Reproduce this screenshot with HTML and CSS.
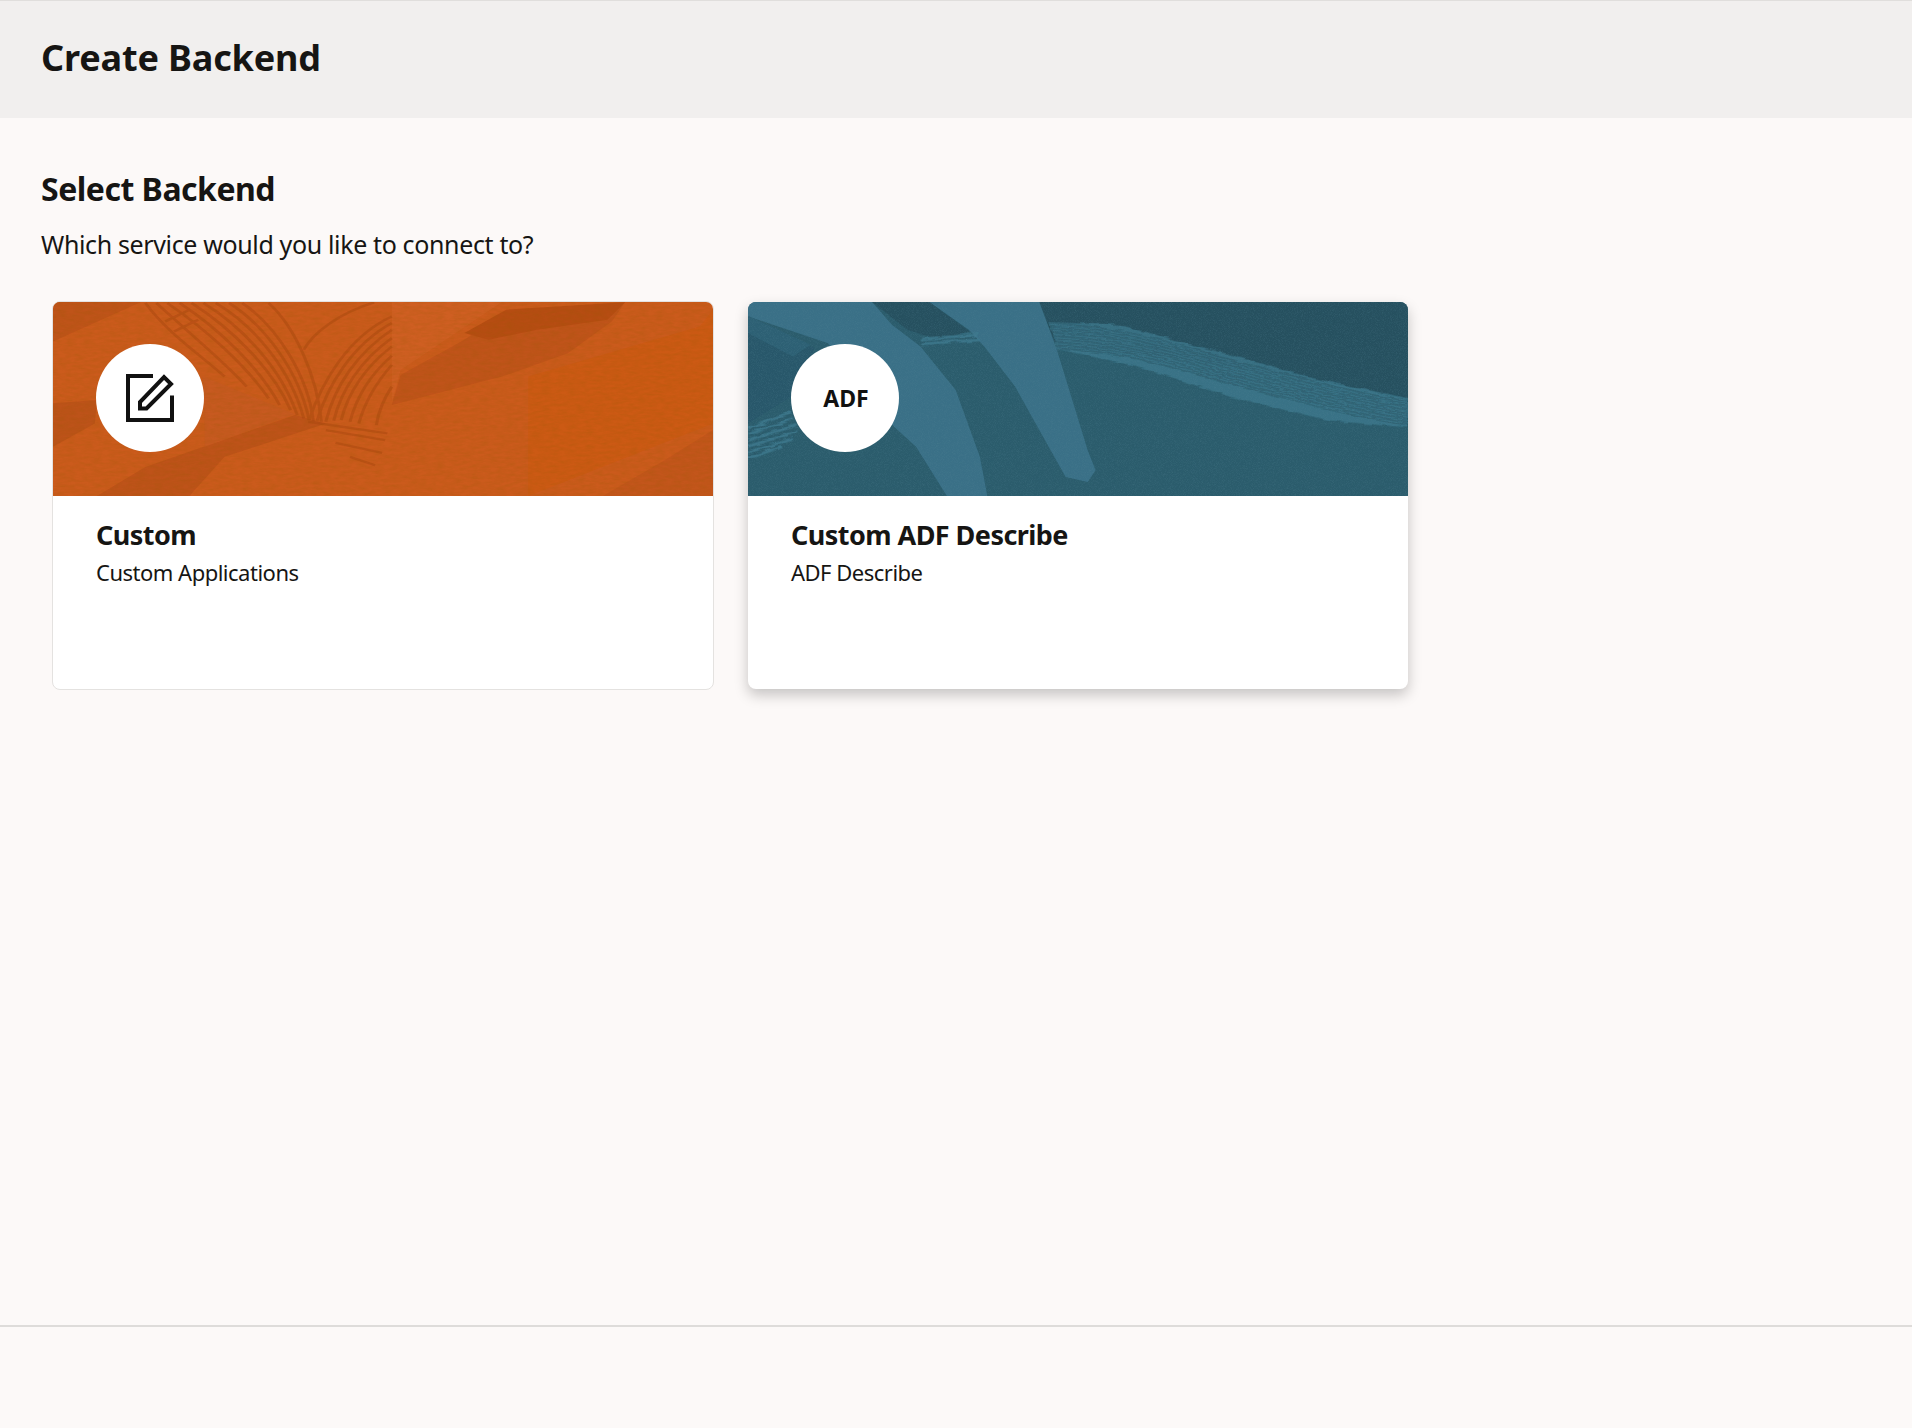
FILE: index.html
```html
<!DOCTYPE html>
<html lang="en">
<head>
    <meta charset="UTF-8">
    <title>Create Backend</title>
    <link rel="stylesheet" href="styles.css">
</head>
<body>
    <div class="page">
        <header class="page-header">
            <h1 class="page-title">Create Backend</h1>
        </header>

        <main class="page-content">
            <h2 class="section-title">Select Backend</h2>
            <p class="section-text">Which service would you like to connect to?</p>

            <div class="card-list">
                <div class="card">
                    <div class="card-banner">
                        <svg class="banner-art" viewBox="30 37 1500 580" preserveAspectRatio="none">
                            <defs>
                                <filter id="paper" x="0" y="0" width="100%" height="100%">
                                    <feTurbulence type="fractalNoise" baseFrequency="0.05 0.12" numOctaves="3" seed="4"/>
                                    <feColorMatrix values="0 0 0 0 0.3  0 0 0 0 0.1  0 0 0 0 0  0.9 0 0 0 -0.28"/>
                                </filter>
                            </defs>
                            <rect x="30" y="37" width="1500" height="580" fill="#cb5b1c"/>
                            <path d="M30 37H230L30 155Z" fill="#bf5419"/>
                            <path d="M30 340L130 330L125 400L30 470Z" fill="#bd5319"/>
                            <path d="M130 617L240 530L580 375L650 400L420 500L340 617Z" fill="#be5319"/>
                            <path d="M370 258L580 372L375 470L373 330Z" fill="#c75a20"/>
                            <path d="M800 345L820 255L965 150L1060 65L1330 38L1300 95L1200 190L1050 260Z" fill="#c0541a"/>
                            <path d="M965 130L1060 60L1330 38L1290 90L1130 120L1020 150Z" fill="#b64d12"/>
                            <path d="M1530 420V617H1280L1420 510Z" fill="#c3561b"/>
                            <path d="M800 37H1050L820 240L800 340Z" fill="#cf6024" opacity=".8"/>
                            <path d="M1110 260L1500 110L1530 60V400L1110 617Z" fill="#cc5a14"/>
                            <g fill="none" stroke="#ab4810" stroke-width="7" opacity=".5">
                                <path d="M240 40C290 130 370 200 420 260"/>
                                <path d="M265 40C335 125 420 215 470 290"/>
                                <path d="M290 40C380 120 470 230 520 325"/>
                                <path d="M318 40C410 120 500 235 545 345"/>
                                <path d="M345 40C440 120 530 240 570 360"/>
                                <path d="M372 40C465 115 550 240 585 375"/>
                                <path d="M400 40C490 110 570 240 600 385"/>
                                <path d="M430 40C515 110 590 250 612 390"/>
                                <path d="M460 40C540 110 610 260 622 395"/>
                                <path d="M520 40C580 110 630 260 640 395"/>
                                <path d="M800 80C700 140 640 280 612 390"/>
                                <path d="M800 100C710 165 655 285 630 392"/>
                                <path d="M800 120C720 190 670 290 650 395"/>
                                <path d="M800 145C730 210 685 300 668 392"/>
                                <path d="M800 170C740 230 700 310 685 390"/>
                                <path d="M800 198C755 250 720 320 705 395"/>
                                <path d="M800 225C770 270 740 330 725 400"/>
                                <path d="M800 290C785 320 770 360 765 405"/>
                                <path d="M760 38C680 70 620 130 600 180"/>
                                <path d="M610 395L790 430"/>
                                <path d="M650 420L785 450"/>
                                <path d="M672 458L778 488"/>
                                <path d="M705 500L762 525"/>
                                <path d="M285 95L340 60"/>
                                <path d="M305 125L360 90"/>
                            </g>
                            <rect x="30" y="37" width="1500" height="580" filter="url(#paper)" opacity=".4"/>
                        </svg>
                        <div class="card-badge">
                            <svg class="edit-icon" viewBox="0 0 48 48">
                                <path d="M27 2H2V46H46V21.5"/>
                                <path d="M14 34.5V28L38 3L45 10L20.5 34.5Z"/>
                            </svg>
                        </div>
                    </div>
                    <div class="card-body">
                        <div class="card-title">Custom</div>
                        <div class="card-text">Custom Applications</div>
                    </div>
                </div>

                <div class="card card-hover">
                    <div class="card-banner">
                        <svg class="banner-art" viewBox="18 37 1500 580" preserveAspectRatio="none">
                            <defs>
                                <filter id="grain" x="0" y="0" width="100%" height="100%">
                                    <feTurbulence type="fractalNoise" baseFrequency="0.5" numOctaves="2" seed="7"/>
                                    <feColorMatrix values="0 0 0 0 0.1  0 0 0 0 0.25  0 0 0 0 0.32  1.4 0 0 0 -0.55"/>
                                </filter>
                                <filter id="rough" x="0" y="0" width="100%" height="100%">
                                    <feTurbulence type="fractalNoise" baseFrequency="0.03 0.08" numOctaves="2" seed="3"/>
                                    <feDisplacementMap in="SourceGraphic" scale="14" xChannelSelector="R" yChannelSelector="G"/>
                                </filter>
                                <clipPath id="band-clip">
                                    <path d="M700 98L860 105L1100 190L1300 265L1518 325V412L1340 392L1120 322L900 228L720 178Z"/>
                                </clipPath>
                            </defs>
                            <rect x="18" y="37" width="1500" height="580" fill="#2b5c6c"/>
                            <path d="M680 37H1518V325L1300 270L1000 205L720 175Z" fill="#26505f"/>
                            <path d="M18 130L100 130L170 175L116 320L18 400Z" fill="#28576a"/>
                            <path d="M18 37H300L345 105L410 170L490 300L545 500L562 617H470L400 470L350 410L200 160L18 80Z" fill="#3a7087"/>
                            <path d="M18 78L160 165L120 200L18 130Z" fill="#2d6074"/>
                            <path d="M430 37H680L720 180L790 480L808 540L790 575L740 560L680 420L625 290L555 170L520 120Z" fill="#3a7087"/>
                            <path d="M300 37H430L522 125L450 150L380 120Z" fill="#26505f"/>
                            <g filter="url(#rough)">
                                <g clip-path="url(#band-clip)">
                                    <rect x="690" y="90" width="830" height="330" fill="#3f7b90" opacity=".72"/>
                                    <g fill="none" stroke="#2a5868" stroke-width="3">
                                        <path d="M700 102C900 112 1000 172 1150 222S1400 312 1518 332"/>
                                        <path d="M700 111C900 121 1000 181 1150 231S1400 321 1518 341"/>
                                        <path d="M700 120C900 130 1000 190 1150 240S1400 330 1518 350"/>
                                        <path d="M700 129C900 139 1000 199 1150 249S1400 339 1518 359"/>
                                        <path d="M700 138C900 148 1000 208 1150 258S1400 348 1518 368"/>
                                        <path d="M700 147C900 157 1000 217 1150 267S1400 357 1518 377"/>
                                        <path d="M700 156C900 166 1000 226 1150 276S1400 366 1518 386"/>
                                        <path d="M700 165C900 175 1000 235 1150 285S1400 375 1518 395"/>
                                        <path d="M700 174C900 184 1000 244 1150 294S1400 384 1518 404"/>
                                    </g>
                                </g>
                                <g fill="none" stroke="#3f7b90" stroke-width="8" opacity=".8">
                                    <path d="M410 148L540 135"/>
                                    <path d="M415 162L545 150"/>
                                    <path d="M18 415L115 365"/>
                                    <path d="M18 432L122 385"/>
                                    <path d="M18 450L128 405"/>
                                    <path d="M18 468L130 425"/>
                                    <path d="M18 486L120 445"/>
                                    <path d="M18 504L95 470"/>
                                </g>
                            </g>
                            <rect x="18" y="37" width="1500" height="580" filter="url(#grain)" opacity=".35"/>
                        </svg>
                        <div class="card-badge">
                            <span class="badge-text">ADF</span>
                        </div>
                    </div>
                    <div class="card-body">
                        <div class="card-title">Custom ADF Describe</div>
                        <div class="card-text">ADF Describe</div>
                    </div>
                </div>
            </div>
        </main>

        <footer class="page-footer"></footer>
    </div>
</body>
</html>
```

FILE: styles.css
```css
* {
    box-sizing: border-box;
}

body {
    margin: 0;
    font-family: "Noto Sans", "Open Sans", sans-serif;
    color: #161513;
    background-color: #fcf9f8;
}

.page {
    display: flex;
    flex-direction: column;
    min-height: 100vh;
}

/* Header */
.page-header {
    display: flex;
    align-items: center;
    height: 118px;
    padding: 0 41px;
    background-color: #f1efee;
    border-top: 1px solid #e0dedc;
}

.page-title {
    margin: 0 0 5px;
    font-size: 36px;
    font-weight: 700;
    letter-spacing: -0.15px;
}

/* Content */
.page-content {
    flex: 1;
    padding: 49px 41px 0;
}

.section-title {
    margin: 0;
    font-size: 32px;
    line-height: 44px;
    font-weight: 700;
    letter-spacing: -0.5px;
}

.section-text {
    margin: 17px 0 0;
    font-size: 25px;
    line-height: 32px;
    font-weight: 400;
    letter-spacing: -0.36px;
}

.card-list {
    display: flex;
    gap: 33px;
    margin-top: 41px;
    padding-left: 11px;
}

.card {
    width: 662px;
    height: 389px;
    background-color: #fff;
    border: 1px solid #e4e2e0;
    border-radius: 8px;
    overflow: hidden;
}

.card-hover {
    width: 660px;
    height: 387px;
    margin: 1px;
    border: none;
    box-shadow: 0 6px 14px rgba(0, 0, 0, 0.22);
}

.card-banner {
    position: relative;
    display: flex;
    align-items: center;
    height: 194px;
    padding: 0 0 2px 43px;
}

.banner-art {
    position: absolute;
    top: 0;
    left: 0;
    width: 100%;
    height: 100%;
}

.card-badge {
    position: relative;
    display: flex;
    justify-content: center;
    align-items: center;
    width: 108px;
    height: 108px;
    background-color: #fff;
    border-radius: 50%;
}

.edit-icon {
    width: 48px;
    height: 48px;
    fill: none;
    stroke: #111;
    stroke-width: 4;
}

.badge-text {
    padding-left: 2px;
    font-size: 23px;
    font-weight: 700;
    color: #111;
}

.card-body {
    padding: 20px 43px;
}

.card-title {
    font-size: 27px;
    line-height: 38px;
    font-weight: 700;
    letter-spacing: -0.55px;
}

.card-text {
    margin-top: 2px;
    font-size: 22px;
    line-height: 32px;
    letter-spacing: -0.5px;
}

/* Footer */
.page-footer {
    height: 103px;
    border-top: 2px solid #dedcda;
}
```
